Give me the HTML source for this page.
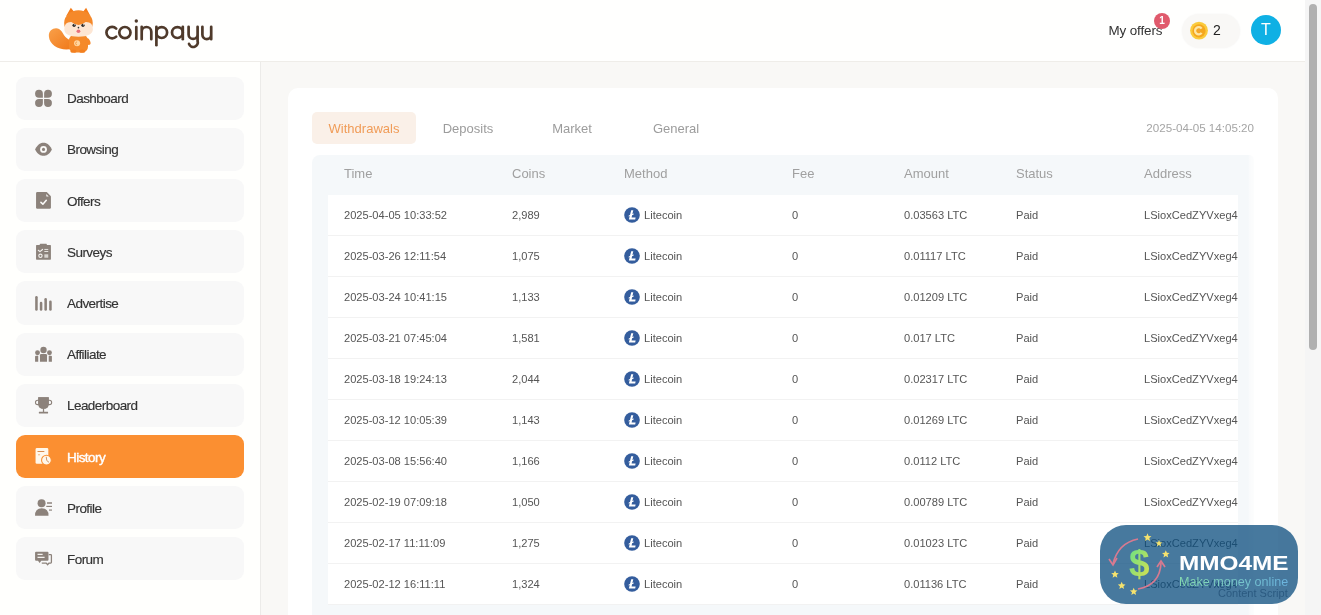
<!DOCTYPE html>
<html><head><meta charset="utf-8">
<style>
*{box-sizing:border-box;margin:0;padding:0}
html,body{width:1321px;height:615px;overflow:hidden}
body{font-family:"Liberation Sans",sans-serif;background:#f9f8f6;position:relative;color:#333}
#wrap{position:absolute;left:0;top:0;width:1321px;height:615px;will-change:transform}
.a{position:absolute}
#hdr{left:0;top:0;width:1305px;height:62px;background:#fffffe;border-bottom:1px solid #efede9}
#side{left:0;top:62px;width:261px;height:553px;background:#fffffd;border-right:1px solid #ecebe9}
.it{position:absolute;left:16px;width:228px;height:43.2px;background:#f8f8f8;border-radius:9px;font-size:13.5px;color:#333;letter-spacing:-0.55px}
.it span{position:absolute;left:51px;top:14.5px;line-height:16px;-webkit-text-stroke:0.15px currentColor}
.it.act{background:#fb8f31;color:#fff}
.it.act span{-webkit-text-stroke:0.4px #fff}
svg.ic{position:absolute;left:28px;width:32px;height:30px}
#card{left:288px;top:88px;width:990px;height:560px;background:#fff;border-radius:10px}
.tab{position:absolute;top:112px;width:104px;height:32px;border-radius:5px;font-size:13px;color:#9c9c9c;text-align:center;line-height:34px}
.tab.act{background:#faf0e8;color:#f09c58}
#ts{position:absolute;right:67px;top:122px;font-size:11.6px;color:#a5a5a5;line-height:12px}
#tbl{left:312px;top:155px;width:942px;height:470px;background:linear-gradient(to right,#f5f8fa 0,#f5f8fa 936px,#fafbfc 938px,#fcfdfd 942px);border-radius:8px 5px 0 0}
.th{position:absolute;top:167px;font-size:13px;color:#a0a0a0;line-height:14px}
#body{left:328px;top:195px;width:910px;height:410px;background:#fff;overflow:hidden}
.r{position:absolute;left:0;width:910px;height:41px;border-bottom:1px solid #f2f2f2;font-size:11.1px;color:#555}
.r span{position:absolute;top:14px;line-height:12px;white-space:nowrap}
.ltc{position:absolute;left:296px;top:12px;width:16px;height:16px}
#scroll{left:1305px;top:0;width:16px;height:615px;background:#f5f5f5}
#thumb{left:1309px;top:4px;width:8px;height:346px;background:#b0b0b0;border-radius:4px}
</style></head><body><div id="wrap">
<div id="hdr" class="a"></div>
<div id="side" class="a"></div>

<div class="it" style="top:76.7px"><span>Dashboard</span></div>
<div class="it" style="top:127.9px"><span>Browsing</span></div>
<div class="it" style="top:179.1px"><span>Offers</span></div>
<div class="it" style="top:230.2px"><span>Surveys</span></div>
<div class="it" style="top:281.4px"><span>Advertise</span></div>
<div class="it" style="top:332.6px"><span>Affiliate</span></div>
<div class="it" style="top:383.8px"><span>Leaderboard</span></div>
<div class="it act" style="top:435.0px"><span>History</span></div>
<div class="it" style="top:486.1px"><span>Profile</span></div>
<div class="it" style="top:537.3px"><span>Forum</span></div>
<svg class="ic" style="top:84px" viewBox="0 0 656 615"><g fill="#8c827b"><path d="M305,280 L305,200 A80,80 0 0 0 225,120 A80,80 0 0 0 145,200 A80,80 0 0 0 225,280 Z"/><path d="M330,280 L330,200 A80,80 0 0 1 410,120 A80,80 0 0 1 490,200 A80,80 0 0 1 410,280 Z"/><path d="M305,305 L305,390 A80,80 0 0 1 225,470 A80,80 0 0 1 145,390 A80,80 0 0 1 225,305 Z"/><path d="M330,305 L330,390 A80,80 0 0 0 410,470 A80,80 0 0 0 490,390 A80,80 0 0 0 410,305 Z"/></g></svg>
<svg class="ic" style="top:135px" viewBox="0 0 656 615"><path fill="#8c827b" d="M145,295 C200,190 260,160 318,160 C376,160 436,190 490,295 C436,400 376,425 318,425 C260,425 200,400 145,295Z"/><circle cx="318" cy="295" r="70" fill="#fbfaf8"/><circle cx="318" cy="295" r="32" fill="#8c827b"/></svg>
<svg class="ic" style="top:186px" viewBox="0 0 656 615"><path fill="#8c827b" d="M190,125 L385,125 L470,210 L470,440 Q470,465 445,465 L190,465 Q165,465 165,440 L165,150 Q165,125 190,125Z"/><path fill="#fbfaf8" d="M372,165 L425,215 L378,215Z"/><polyline points="265,335 305,372 375,292" fill="none" stroke="#fbfaf8" stroke-width="32" stroke-linecap="round" stroke-linejoin="round"/></svg>
<svg class="ic" style="top:237px" viewBox="0 0 656 615"><rect x="165" y="165" width="305" height="300" rx="12" fill="#8c827b"/><rect x="245" y="140" width="140" height="55" rx="8" fill="#8c827b"/><polyline points="212,272 245,300 298,255" fill="none" stroke="#f4f2ef" stroke-width="24" stroke-linecap="round" stroke-linejoin="round"/><path d="M335,255 L415,255 M335,297 L415,297" stroke="#f4f2ef" stroke-width="18"/><circle cx="255" cy="385" r="34" fill="none" stroke="#f4f2ef" stroke-width="22"/><rect x="335" y="355" width="80" height="70" fill="#d9d5d1"/></svg>
<svg class="ic" style="top:288px" viewBox="0 0 656 615"><g stroke="#8c827b" stroke-width="52" stroke-linecap="round"><path d="M173,190 L173,440"/><path d="M268,310 L268,440"/><path d="M362,232 L362,440"/><path d="M460,280 L460,440"/></g></svg>
<svg class="ic" style="top:339px" viewBox="0 0 656 615"><g fill="#8c827b"><circle cx="318" cy="225" r="65"/><path d="M245,465 L245,335 Q245,310 270,310 L365,310 Q390,310 390,335 L390,465Z"/><circle cx="195" cy="282" r="50"/><path d="M145,465 L145,365 Q145,345 165,345 L210,345 L210,465Z"/><circle cx="440" cy="282" r="50"/><path d="M490,465 L490,365 Q490,345 470,345 L425,345 L425,465Z"/></g></svg>
<svg class="ic" style="top:390px" viewBox="0 0 656 615"><g fill="#8c827b"><path d="M210,150 L425,150 L425,270 Q425,385 318,385 Q210,385 210,270Z"/><rect x="305" y="370" width="26" height="90"/><rect x="222" y="448" width="190" height="32" rx="6"/></g><g fill="none" stroke="#8c827b" stroke-width="22"><circle cx="198" cy="255" r="45"/><circle cx="440" cy="255" r="45"/></g><path fill="#8c827b" d="M210,150 L425,150 L425,270 Q425,385 318,385 Q210,385 210,270Z"/></svg>
<svg class="ic" style="top:442px" viewBox="0 0 656 615"><rect x="155" y="125" width="262" height="322" rx="28" fill="#fff7ea"/><path d="M195,195 L335,195" stroke="#d8894a" stroke-width="20"/><path d="M205,262 L248,262" stroke="#f0a060" stroke-width="16"/><circle cx="378" cy="372" r="100" fill="#fff7ea" stroke="#fa8f30" stroke-width="22"/><polyline points="375,312 385,380 425,412" fill="none" stroke="#c07a45" stroke-width="16" stroke-linecap="round" stroke-linejoin="round"/></svg>
<svg class="ic" style="top:493px" viewBox="0 0 656 615"><g fill="#8c827b"><circle cx="278" cy="208" r="82"/><path d="M145,465 Q140,315 282,312 Q425,315 420,465Z"/></g><path d="M390,205 L492,205" stroke="#8c827b" stroke-width="30"/><path d="M375,275 L492,275" stroke="#8c827b" stroke-width="24"/><path d="M430,350 L492,350" stroke="#8c827b" stroke-width="24"/></svg>
<svg class="ic" style="top:544px" viewBox="0 0 656 615"><path fill="#8c827b" d="M165,160 L400,160 Q420,160 420,180 L420,325 Q420,345 400,345 L272,345 L238,388 L205,345 L165,345 Q145,345 145,325 L145,180 Q145,160 165,160Z"/><path d="M195,215 L300,215 M195,275 L340,275" stroke="#f4f2ef" stroke-width="26"/><path d="M425,218 L465,218 Q480,218 480,233 L480,375 Q480,390 465,390 L432,390 L400,425 L375,390 L282,390" fill="none" stroke="#8c827b" stroke-width="26" stroke-linejoin="round"/></svg>
<svg class="a" style="left:100px;top:10px;width:120px;height:45px" viewBox="100 10 120 45"><g fill="none" stroke="#4f3a2b" stroke-width="2.7" stroke-linecap="round">
<path d="M116.2,28.6 A5.7,5.7 0 1 0 116.2,36.6"/>
<circle cx="124.9" cy="32.6" r="5.6"/>
<path d="M136.3,27 L136.3,39"/>
<path d="M141.7,26.8 L141.7,39.2 M141.7,31.8 A4.8,4.8 0 0 1 151.3,31.8 L151.3,39.2"/>
<path d="M156.4,26.8 L156.4,45.2"/><circle cx="161.7" cy="32.6" r="5.4"/>
<circle cx="177.4" cy="32.6" r="5.4"/><path d="M182.8,26.8 L182.8,39.2"/>
<path d="M188.6,26.8 L188.6,34.4 A4.5,4.5 0 0 0 197.6,34.4 M197.6,26.8 L197.6,41 A4.5,4.5 0 0 1 189,43.8"/>
<path d="M202.4,26.8 L202.4,34.8 A4.4,4.4 0 0 0 211.2,34.8 M211.2,26.8 L211.2,39.2"/>
</g><circle cx="136.3" cy="21" r="1.7" fill="#4f3a2b"/></svg>
<svg class="a" style="left:40px;top:0px;width:60px;height:60px" viewBox="0 0 440 440">
<defs><linearGradient id="tg" x1="0" y1="0" x2="1" y2="1"><stop offset="0" stop-color="#f9a04a"/><stop offset="1" stop-color="#f07818"/></linearGradient></defs>
<path d="M240,355 C165,380 70,340 65,265 C62,218 108,196 140,212 C172,230 172,285 240,300 Z" fill="url(#tg)"/>
<rect x="212" y="255" width="140" height="130" rx="42" fill="#f58a2a"/>
<ellipse cx="245" cy="375" rx="22" ry="12" fill="#f3801f"/><ellipse cx="310" cy="375" rx="22" ry="12" fill="#f3801f"/>
<circle cx="272" cy="318" r="22" fill="#ffd6a0"/>
<path d="M272,307 A11,11 0 1 0 272,329" fill="none" stroke="#f08a2a" stroke-width="5"/>
<path d="M192,118 L226,56 L262,100Z M305,100 L338,56 L370,118Z" fill="#f47d1c"/>
<ellipse cx="282" cy="168" rx="105" ry="92" fill="#f5892a"/>
<path d="M178,215 Q178,160 230,162 Q282,205 335,162 Q388,160 388,215 Q385,268 282,270 Q180,268 178,215Z" fill="#fde6d3"/><ellipse cx="352" cy="305" rx="16" ry="26" fill="#f5892a" transform="rotate(-25 352 305)"/>
<circle cx="250" cy="186" r="12" fill="#2a2a2a"/><circle cx="315" cy="186" r="12" fill="#2a2a2a"/>
<circle cx="254" cy="182" r="4" fill="#fff"/><circle cx="319" cy="182" r="4" fill="#fff"/>
<ellipse cx="282" cy="229" rx="14" ry="13" fill="#e8707a"/>
<circle cx="282" cy="203" r="6" fill="#333"/>
</svg>

<div class="a" style="left:1108.5px;top:23.5px;font-size:13.4px;color:#333;line-height:14px;letter-spacing:-0.1px">My offers</div>
<div class="a" style="left:1154px;top:13px;width:16px;height:16px;border-radius:8px;background:#e05a6c;color:#fff;font-size:10px;font-weight:bold;text-align:center;line-height:16px">1</div>
<div class="a" style="left:1182px;top:14px;width:58px;height:34px;border-radius:17px;background:#f9f8f6;box-shadow:0 0 2px rgba(0,0,0,0.05)"></div>
<svg class="a" style="left:1189px;top:21px;width:20px;height:20px" viewBox="0 0 20 20"><circle cx="10" cy="9.6" r="8.9" fill="#fbcb3c"/><circle cx="10" cy="9.8" r="6.6" fill="#f5a71e"/><path d="M12.6,7.6 A3.6,3.6 0 1 0 12.6,11.8" fill="none" stroke="#fde6a6" stroke-width="2.3"/><circle cx="10.2" cy="9.7" r="1.2" fill="#f0a43a"/></svg>
<div class="a" style="left:1213px;top:22px;font-size:14px;color:#222;line-height:16px">2</div>
<div class="a" style="left:1251px;top:15px;width:30px;height:30px;border-radius:50%;background:#0fb0e4;color:#fff;font-size:16px;text-align:center;line-height:30px">T</div>

<div id="card" class="a"></div>
<div class="tab act" style="left:312px">Withdrawals</div>
<div class="tab" style="left:416px">Deposits</div>
<div class="tab" style="left:520px">Market</div>
<div class="tab" style="left:624px">General</div>
<div id="ts">2025-04-05 14:05:20</div>
<div id="tbl" class="a"></div>
<div class="th" style="left:344px">Time</div>
<div class="th" style="left:512px">Coins</div>
<div class="th" style="left:624px">Method</div>
<div class="th" style="left:792px">Fee</div>
<div class="th" style="left:904px">Amount</div>
<div class="th" style="left:1016px">Status</div>
<div class="th" style="left:1144px">Address</div>
<div id="body" class="a">
<div class="r" style="top:0px"><span style="left:16px">2025-04-05 10:33:52</span><span style="left:184px">2,989</span><svg class="ltc" viewBox="0 0 16 16"><circle cx="8" cy="8" r="7.8" fill="#345d9d"/><path d="M7.2,3.2 L9.3,3.2 L8.4,7 L9.9,6.4 L9.6,7.6 L8.1,8.2 L7.6,10.6 L11.6,10.6 L11.2,12.6 L4.9,12.6 L5.7,9.1 L4.5,9.6 L4.8,8.4 L6,7.9Z" fill="#fff"/></svg><span style="left:316px">Litecoin</span><span style="left:464px">0</span><span style="left:576px">0.03563 LTC</span><span style="left:688px">Paid</span><span style="left:816px">LSioxCedZYVxeg4</span></div>
<div class="r" style="top:41px"><span style="left:16px">2025-03-26 12:11:54</span><span style="left:184px">1,075</span><svg class="ltc" viewBox="0 0 16 16"><circle cx="8" cy="8" r="7.8" fill="#345d9d"/><path d="M7.2,3.2 L9.3,3.2 L8.4,7 L9.9,6.4 L9.6,7.6 L8.1,8.2 L7.6,10.6 L11.6,10.6 L11.2,12.6 L4.9,12.6 L5.7,9.1 L4.5,9.6 L4.8,8.4 L6,7.9Z" fill="#fff"/></svg><span style="left:316px">Litecoin</span><span style="left:464px">0</span><span style="left:576px">0.01117 LTC</span><span style="left:688px">Paid</span><span style="left:816px">LSioxCedZYVxeg4</span></div>
<div class="r" style="top:82px"><span style="left:16px">2025-03-24 10:41:15</span><span style="left:184px">1,133</span><svg class="ltc" viewBox="0 0 16 16"><circle cx="8" cy="8" r="7.8" fill="#345d9d"/><path d="M7.2,3.2 L9.3,3.2 L8.4,7 L9.9,6.4 L9.6,7.6 L8.1,8.2 L7.6,10.6 L11.6,10.6 L11.2,12.6 L4.9,12.6 L5.7,9.1 L4.5,9.6 L4.8,8.4 L6,7.9Z" fill="#fff"/></svg><span style="left:316px">Litecoin</span><span style="left:464px">0</span><span style="left:576px">0.01209 LTC</span><span style="left:688px">Paid</span><span style="left:816px">LSioxCedZYVxeg4</span></div>
<div class="r" style="top:123px"><span style="left:16px">2025-03-21 07:45:04</span><span style="left:184px">1,581</span><svg class="ltc" viewBox="0 0 16 16"><circle cx="8" cy="8" r="7.8" fill="#345d9d"/><path d="M7.2,3.2 L9.3,3.2 L8.4,7 L9.9,6.4 L9.6,7.6 L8.1,8.2 L7.6,10.6 L11.6,10.6 L11.2,12.6 L4.9,12.6 L5.7,9.1 L4.5,9.6 L4.8,8.4 L6,7.9Z" fill="#fff"/></svg><span style="left:316px">Litecoin</span><span style="left:464px">0</span><span style="left:576px">0.017 LTC</span><span style="left:688px">Paid</span><span style="left:816px">LSioxCedZYVxeg4</span></div>
<div class="r" style="top:164px"><span style="left:16px">2025-03-18 19:24:13</span><span style="left:184px">2,044</span><svg class="ltc" viewBox="0 0 16 16"><circle cx="8" cy="8" r="7.8" fill="#345d9d"/><path d="M7.2,3.2 L9.3,3.2 L8.4,7 L9.9,6.4 L9.6,7.6 L8.1,8.2 L7.6,10.6 L11.6,10.6 L11.2,12.6 L4.9,12.6 L5.7,9.1 L4.5,9.6 L4.8,8.4 L6,7.9Z" fill="#fff"/></svg><span style="left:316px">Litecoin</span><span style="left:464px">0</span><span style="left:576px">0.02317 LTC</span><span style="left:688px">Paid</span><span style="left:816px">LSioxCedZYVxeg4</span></div>
<div class="r" style="top:205px"><span style="left:16px">2025-03-12 10:05:39</span><span style="left:184px">1,143</span><svg class="ltc" viewBox="0 0 16 16"><circle cx="8" cy="8" r="7.8" fill="#345d9d"/><path d="M7.2,3.2 L9.3,3.2 L8.4,7 L9.9,6.4 L9.6,7.6 L8.1,8.2 L7.6,10.6 L11.6,10.6 L11.2,12.6 L4.9,12.6 L5.7,9.1 L4.5,9.6 L4.8,8.4 L6,7.9Z" fill="#fff"/></svg><span style="left:316px">Litecoin</span><span style="left:464px">0</span><span style="left:576px">0.01269 LTC</span><span style="left:688px">Paid</span><span style="left:816px">LSioxCedZYVxeg4</span></div>
<div class="r" style="top:246px"><span style="left:16px">2025-03-08 15:56:40</span><span style="left:184px">1,166</span><svg class="ltc" viewBox="0 0 16 16"><circle cx="8" cy="8" r="7.8" fill="#345d9d"/><path d="M7.2,3.2 L9.3,3.2 L8.4,7 L9.9,6.4 L9.6,7.6 L8.1,8.2 L7.6,10.6 L11.6,10.6 L11.2,12.6 L4.9,12.6 L5.7,9.1 L4.5,9.6 L4.8,8.4 L6,7.9Z" fill="#fff"/></svg><span style="left:316px">Litecoin</span><span style="left:464px">0</span><span style="left:576px">0.0112 LTC</span><span style="left:688px">Paid</span><span style="left:816px">LSioxCedZYVxeg4</span></div>
<div class="r" style="top:287px"><span style="left:16px">2025-02-19 07:09:18</span><span style="left:184px">1,050</span><svg class="ltc" viewBox="0 0 16 16"><circle cx="8" cy="8" r="7.8" fill="#345d9d"/><path d="M7.2,3.2 L9.3,3.2 L8.4,7 L9.9,6.4 L9.6,7.6 L8.1,8.2 L7.6,10.6 L11.6,10.6 L11.2,12.6 L4.9,12.6 L5.7,9.1 L4.5,9.6 L4.8,8.4 L6,7.9Z" fill="#fff"/></svg><span style="left:316px">Litecoin</span><span style="left:464px">0</span><span style="left:576px">0.00789 LTC</span><span style="left:688px">Paid</span><span style="left:816px">LSioxCedZYVxeg4</span></div>
<div class="r" style="top:328px"><span style="left:16px">2025-02-17 11:11:09</span><span style="left:184px">1,275</span><svg class="ltc" viewBox="0 0 16 16"><circle cx="8" cy="8" r="7.8" fill="#345d9d"/><path d="M7.2,3.2 L9.3,3.2 L8.4,7 L9.9,6.4 L9.6,7.6 L8.1,8.2 L7.6,10.6 L11.6,10.6 L11.2,12.6 L4.9,12.6 L5.7,9.1 L4.5,9.6 L4.8,8.4 L6,7.9Z" fill="#fff"/></svg><span style="left:316px">Litecoin</span><span style="left:464px">0</span><span style="left:576px">0.01023 LTC</span><span style="left:688px">Paid</span><span style="left:816px">LSioxCedZYVxeg4</span></div>
<div class="r" style="top:369px"><span style="left:16px">2025-02-12 16:11:11</span><span style="left:184px">1,324</span><svg class="ltc" viewBox="0 0 16 16"><circle cx="8" cy="8" r="7.8" fill="#345d9d"/><path d="M7.2,3.2 L9.3,3.2 L8.4,7 L9.9,6.4 L9.6,7.6 L8.1,8.2 L7.6,10.6 L11.6,10.6 L11.2,12.6 L4.9,12.6 L5.7,9.1 L4.5,9.6 L4.8,8.4 L6,7.9Z" fill="#fff"/></svg><span style="left:316px">Litecoin</span><span style="left:464px">0</span><span style="left:576px">0.01136 LTC</span><span style="left:688px">Paid</span><span style="left:816px">LSioxCedZYVxeg4</span></div>
</div>
<div class="a" style="left:1100px;top:525px;width:198px;height:79px;border-radius:26px;background:rgba(10,76,126,0.75)"></div>
<div class="a" style="left:1179px;top:552px;font-size:21px;font-weight:bold;color:#fff;line-height:22px;transform:scaleX(1.16);transform-origin:0 0">MMO4ME</div>
<div class="a" style="left:1179px;top:575px;font-size:12.6px;line-height:14px;background:linear-gradient(90deg,#86dcb0,#6bb4e0);-webkit-background-clip:text;background-clip:text;color:transparent">Make money online</div>
<div class="a" style="left:1218px;top:587px;font-size:11px;color:#2b5a80;line-height:13px">Content Script</div>
<svg class="a" style="left:1100px;top:525px;width:90px;height:79px" viewBox="0 0 90 79">
<defs><linearGradient id="dg" x1="0" y1="0" x2="1" y2="1"><stop offset="0" stop-color="#5fe08a"/><stop offset="1" stop-color="#e4e04a"/></linearGradient></defs>
<text x="29" y="51" font-family="Liberation Sans" font-weight="bold" font-size="37" fill="url(#dg)">$</text>
<path d="M38,14 Q18,18 13,39" fill="none" stroke="#d87a90" stroke-width="1.7"/>
<path d="M9,34 L13,40 L17,33" fill="none" stroke="#d87a90" stroke-width="1.7"/>
<path d="M61,38 Q60,60 38,64" fill="none" stroke="#d87a90" stroke-width="1.7"/>
<path d="M57,42 L61,36 L65,42" fill="none" stroke="#d87a90" stroke-width="1.7"/>
<g fill="#f6e36e"><polygon points="47.5,8.3 48.6,11.0 51.5,11.2 49.3,13.1 50.0,15.9 47.5,14.4 45.0,15.9 45.7,13.1 43.5,11.2 46.4,11.0"/><polygon points="59.0,14.9 60.0,17.2 62.4,17.4 60.5,19.0 61.1,21.4 59.0,20.1 56.9,21.4 57.5,19.0 55.6,17.4 58.0,17.2"/><polygon points="65.8,25.2 66.9,27.7 69.6,28.0 67.5,29.8 68.2,32.4 65.8,31.0 63.4,32.4 64.1,29.8 62.0,28.0 64.7,27.7"/><polygon points="15.0,45.5 16.1,48.0 18.8,48.3 16.7,50.1 17.4,52.7 15.0,51.3 12.6,52.7 13.3,50.1 11.2,48.3 13.9,48.0"/><polygon points="21.7,56.8 22.8,59.3 25.5,59.6 23.4,61.4 24.1,64.0 21.7,62.6 19.3,64.0 20.0,61.4 17.9,59.6 20.6,59.3"/><polygon points="33.7,62.7 34.8,65.2 37.5,65.5 35.4,67.3 36.1,69.9 33.7,68.5 31.3,69.9 32.0,67.3 29.9,65.5 32.6,65.2"/></g>
</svg>

<div id="scroll" class="a"></div><div id="thumb" class="a"></div>
</div></body></html>
